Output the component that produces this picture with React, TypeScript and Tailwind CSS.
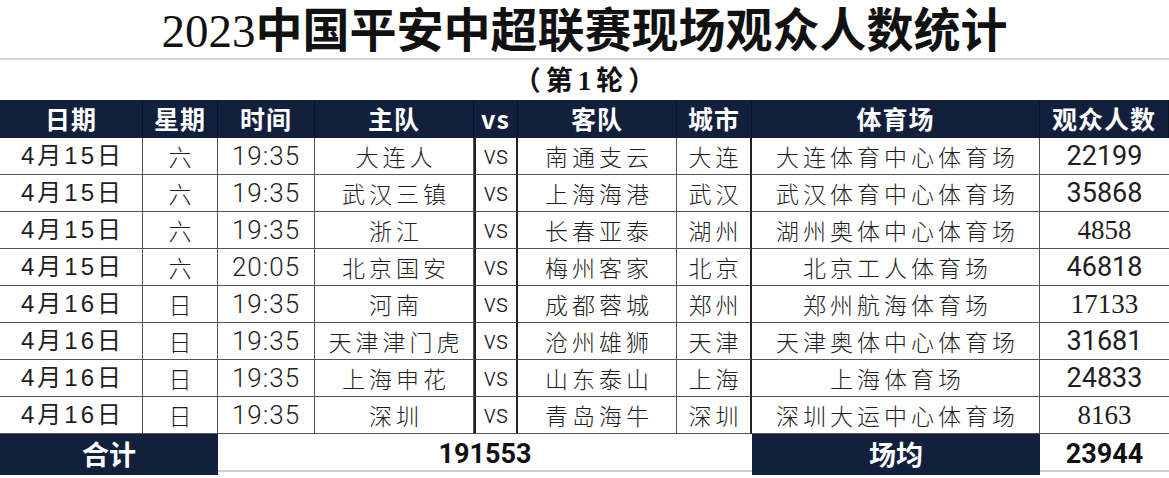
import React from "react";

type Row = {
  date: string;
  week: string;
  time: string;
  home: string;
  away: string;
  city: string;
  venue: string;
  fans: string;
  serif?: boolean;
};

const ROWS: Row[] = [
  { date: "4月15日", week: "六", time: "19:35", home: "大连人", away: "南通支云", city: "大连", venue: "大连体育中心体育场", fans: "22199" },
  { date: "4月15日", week: "六", time: "19:35", home: "武汉三镇", away: "上海海港", city: "武汉", venue: "武汉体育中心体育场", fans: "35868" },
  { date: "4月15日", week: "六", time: "19:35", home: "浙江", away: "长春亚泰", city: "湖州", venue: "湖州奥体中心体育场", fans: "4858", serif: true },
  { date: "4月15日", week: "六", time: "20:05", home: "北京国安", away: "梅州客家", city: "北京", venue: "北京工人体育场", fans: "46818" },
  { date: "4月16日", week: "日", time: "19:35", home: "河南", away: "成都蓉城", city: "郑州", venue: "郑州航海体育场", fans: "17133", serif: true },
  { date: "4月16日", week: "日", time: "19:35", home: "天津津门虎", away: "沧州雄狮", city: "天津", venue: "天津奥体中心体育场", fans: "31681" },
  { date: "4月16日", week: "日", time: "19:35", home: "上海申花", away: "山东泰山", city: "上海", venue: "上海体育场", fans: "24833" },
  { date: "4月16日", week: "日", time: "19:35", home: "深圳", away: "青岛海牛", city: "深圳", venue: "深圳大运中心体育场", fans: "8163", serif: true },
];

const HEAD = ["日期", "星期", "时间", "主队", "vs", "客队", "城市", "体育场", "观众人数"];

const GRID =
  "grid grid-cols-[143px_75px_97px_159px_44px_159px_75px_288px_129px]";

const cell =
  "flex items-center justify-center border-r border-b border-[#555] h-[37px] text-[#1e1e1e]";
const cjk =
  "font-['Noto_Sans_CJK_SC',sans-serif] font-light text-[23px] tracking-[4px] pl-[4px]";
const num = "font-['Roboto','Noto_Sans_CJK_SC',sans-serif]";

export default function App() {
  return (
    <div className="w-[1169px] h-[478px] bg-white overflow-hidden">
      <div className="h-[60px] flex items-center justify-center border-b-2 border-[#d4d4d4]">
        <h1 className="text-[47px] leading-[58px] text-[#111] whitespace-nowrap">
          <span className="font-['Liberation_Serif',serif]">2023</span>
          <span className="font-bold font-['Noto_Sans_CJK_SC',sans-serif]">
            中国平安中超联赛现场观众人数统计
          </span>
        </h1>
      </div>
      <div className="h-[40px] flex items-center justify-center">
        <span className="text-[27px] leading-none font-bold tracking-[5px] pl-[5px] text-[#111] font-['Noto_Sans_CJK_SC',serif]">
          （第<span className="font-['Liberation_Serif',serif]">1</span>轮）
        </span>
      </div>

      <div className={`${GRID} bg-[#13203d] h-[38px]`}>
        {HEAD.map((h) => (
          <div
            key={h}
            className="flex items-center justify-center border-r border-black/40 text-white font-bold text-[25px] tracking-[1px] font-['Noto_Sans_CJK_SC',sans-serif]"
          >
            {h}
          </div>
        ))}
      </div>

      {ROWS.map((r, i) => (
        <div key={i} className={GRID}>
          <div className={`${cell} font-['Liberation_Sans','Noto_Sans_CJK_SC',sans-serif] text-[24px] tracking-[3px] pl-[3px]`}>
            {r.date}
          </div>
          <div className={`${cell} ${cjk}`}>{r.week}</div>
          <div className={`${cell} ${num} font-light text-[26px] tracking-[1px]`}>
            {r.time}
          </div>
          <div className={`${cell} ${cjk}`}>{r.home}</div>
          <div className={`${cell} ${num} font-light text-[25px] border-r-2 border-l-2 border-l-[#222] border-r-[#222]`}>
            vs
          </div>
          <div className={`${cell} ${cjk}`}>{r.away}</div>
          <div className={`${cell} ${cjk} border-r-2 border-r-[#222]`}>{r.city}</div>
          <div className={`${cell} ${cjk}`}>{r.venue}</div>
          <div
            className={`${cell} border-r-0 text-[27px] ${
              r.serif
                ? "font-['Liberation_Serif',serif]"
                : "font-['Roboto',sans-serif]"
            }`}
          >
            {r.fans}
          </div>
        </div>
      ))}

      <div className="grid grid-cols-[218px_534px_288px_129px] h-[38px] border-b-2 border-[#cfcfcf]">
        <div className="flex items-center justify-center bg-[#13203d] text-white text-[27px] font-bold font-['Noto_Sans_CJK_SC',sans-serif]">
          合计
        </div>
        <div className="flex items-center justify-center text-[27px] font-bold text-[#111] font-['Roboto',sans-serif]">
          191553
        </div>
        <div className="flex items-center justify-center bg-[#13203d] text-white text-[27px] font-bold font-['Noto_Sans_CJK_SC',sans-serif]">
          场均
        </div>
        <div className="flex items-center justify-center text-[27px] font-bold text-[#111] font-['Roboto',sans-serif]">
          23944
        </div>
      </div>
    </div>
  );
}
